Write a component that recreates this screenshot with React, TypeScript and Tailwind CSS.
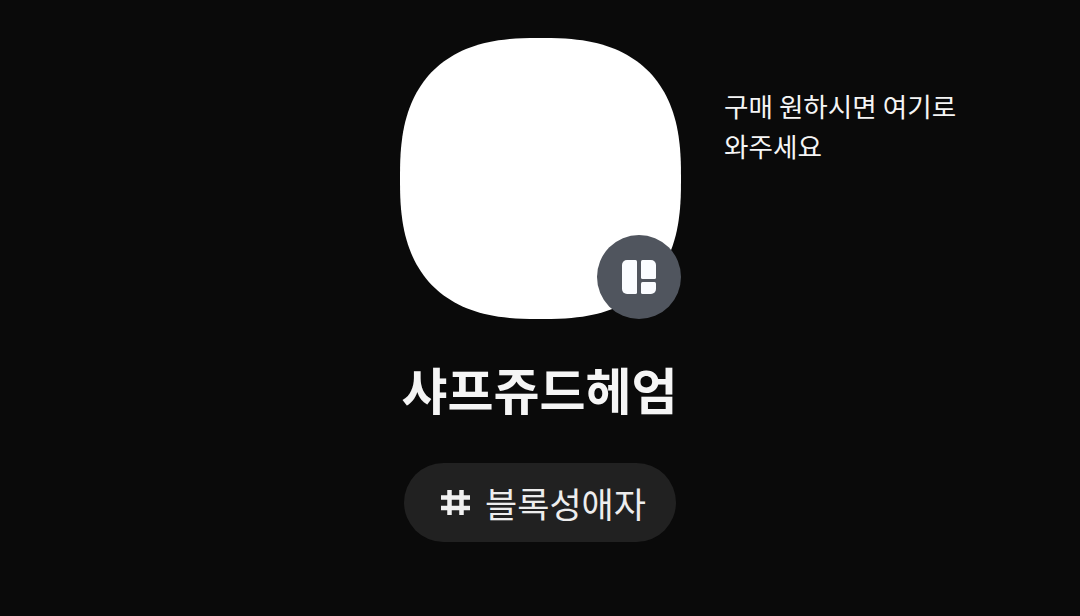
const fontStack = 'font-["Noto_Sans_CJK_KR","Noto_Sans",sans-serif]';

// superellipse outline, n picked by eye against the reference
const squirclePath = Array.from({ length: 180 }, (_, i) => {
  const a = (i / 180) * Math.PI * 2;
  const c = Math.cos(a);
  const s = Math.sin(a);
  const x = 50 + 50 * Math.sign(c) * Math.abs(c) ** (2 / 2.6);
  const y = 50 + 50 * Math.sign(s) * Math.abs(s) ** (2 / 2.6);
  return `${i === 0 ? 'M' : 'L'}${x.toFixed(2)} ${y.toFixed(2)}`;
}).join('') + 'Z';

function Squircle() {
  return (
    <svg viewBox="0 0 100 100" className="block h-[281px] w-[281px]">
      <path d={squirclePath} fill="#ffffff" />
    </svg>
  );
}

function LayoutBadge() {
  return (
    <div className="absolute bottom-0 right-0 flex h-[84px] w-[84px] items-center justify-center rounded-full bg-[#50555e]">
      <svg viewBox="0 0 34 34" className="h-[34px] w-[34px]" fill="#fafcff">
        <path d="M5 0H13.5A1.5 1.5 0 0 1 15 1.5V32.5A1.5 1.5 0 0 1 13.5 34H5A5 5 0 0 1 0 29V5A5 5 0 0 1 5 0Z" />
        <path d="M20.5 0H29A5 5 0 0 1 34 5V17.5A1.5 1.5 0 0 1 32.5 19H20.5A1.5 1.5 0 0 1 19 17.5V1.5A1.5 1.5 0 0 1 20.5 0Z" />
        <path d="M20.5 22H32.5A1.5 1.5 0 0 1 34 23.5V29A5 5 0 0 1 29 34H20.5A1.5 1.5 0 0 1 19 32.5V23.5A1.5 1.5 0 0 1 20.5 22Z" />
      </svg>
    </div>
  );
}

export default function App() {
  return (
    <div className={`grid h-[616px] w-[1080px] grid-cols-[400px_281px_1fr] overflow-hidden bg-[#0a0a0a] pt-[38px] ${fontStack}`}>
      <div />
      <div className="flex flex-col items-center">
        <div className="relative">
          <Squircle />
          <LayoutBadge />
        </div>
        <h1 className="ml-[-2px] mt-[33px] whitespace-nowrap text-[50px] font-bold leading-[72px] text-[#f5f5f5]">샤프쥬드헤엄</h1>
        <div className="ml-[-1px] mt-[39px] flex h-[79px] w-[272px] items-center gap-[15px] rounded-full bg-[#212121] pl-[37px]">
          <svg viewBox="0 0 29 25" className="h-[25px] w-[29px]" stroke="#f2f2f2" strokeWidth="4.5" fill="none">
            <path d="M8.5 0V25M20.5 0V25M0 7.5H29M0 18H29" />
          </svg>
          <span className="whitespace-nowrap text-[35px] leading-[48px] text-[#ededed]">블록성애자</span>
        </div>
      </div>
      <p className="ml-[43px] mt-[48px] whitespace-nowrap text-[26.6px] leading-[40px] text-[#f5f5f5]">
        구매 원하시면 여기로
        <br />
        와주세요
      </p>
    </div>
  );
}
